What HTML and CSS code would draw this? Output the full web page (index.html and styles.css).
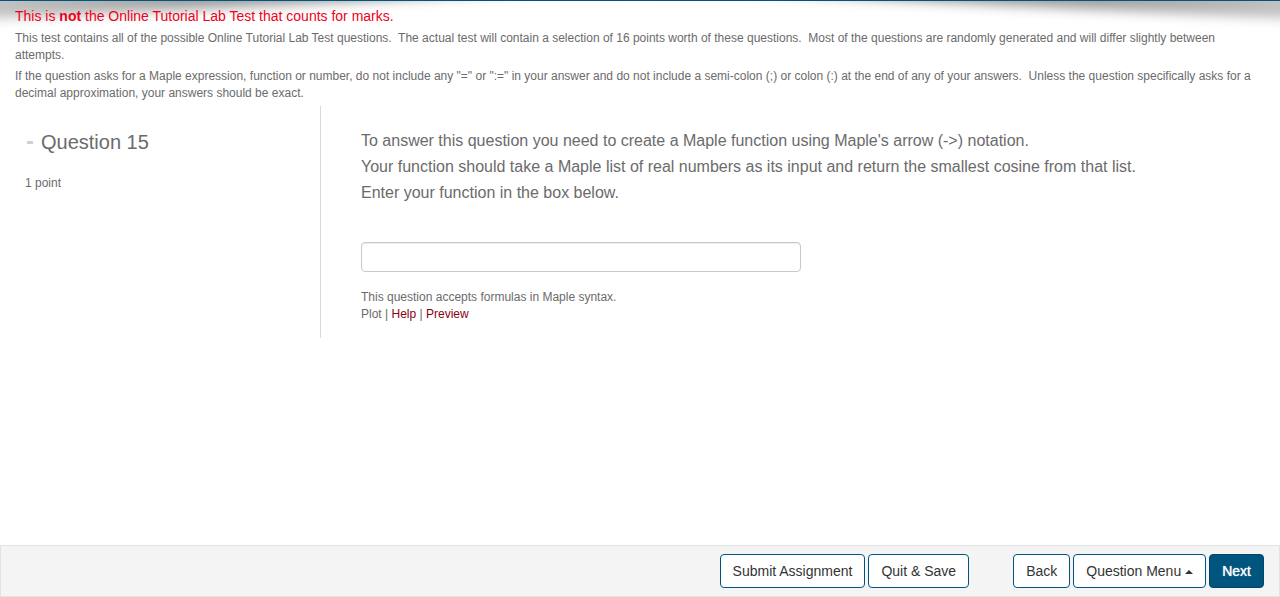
FILE: index.html
```html
<!DOCTYPE html>
<html lang="en">
<head>
<meta charset="utf-8">
<title>Online Tutorial Lab Test</title>
<link rel="stylesheet" href="styles.css">
</head>
<body>
<svg class="top-shadow" viewBox="0 0 1280 40" preserveAspectRatio="none" aria-hidden="true">
  <defs>
    <filter id="soften" x="-10%" y="-100%" width="120%" height="300%">
      <feGaussianBlur stdDeviation="10 6"/>
    </filter>
    <linearGradient id="shade" gradientUnits="userSpaceOnUse" x1="0" y1="0" x2="1280" y2="0">
      <stop offset="0" stop-opacity=".24"/>
      <stop offset=".15" stop-opacity=".37"/>
      <stop offset=".3" stop-opacity=".42"/>
      <stop offset=".5" stop-opacity=".2"/>
      <stop offset=".7" stop-opacity=".42"/>
      <stop offset=".85" stop-opacity=".37"/>
      <stop offset="1" stop-opacity=".24"/>
    </linearGradient>
  </defs>
  <path d="M-60 -40H1340V20L1280 17L1080 8Q900 -1 760 -8Q640 -14 520 -8Q380 -1 200 8L0 17L-60 20Z" fill="url(#shade)" filter="url(#soften)"/>
</svg>
<header class="intro">
  <p class="notice">This is <strong>not</strong> the Online Tutorial Lab Test that counts for marks.</p>
  <p>This test contains all of the possible Online Tutorial Lab Test questions.&nbsp; The actual test will contain a selection of 16 points worth of these questions.&nbsp; Most of the questions are randomly generated and will differ slightly between attempts.</p>
  <p>If the question asks for a Maple expression, function or number, do not include any "=" or ":=" in your answer and do not include a semi-colon (;) or colon (:) at the end of any of your answers.&nbsp; Unless the question specifically asks for a decimal approximation, your answers should be exact.</p>
</header>
<main class="question">
  <section class="summary">
    <h1 class="title"><span class="dash" aria-hidden="true"></span>Question 15</h1>
    <p class="points">1 point</p>
  </section>
  <section class="body">
    <label class="prompt" for="answer">To answer this question you need to create a Maple function using Maple's arrow (-&gt;) notation.<br>Your function should take a Maple list of real numbers as its input and return the smallest cosine from that list.<br>Enter your function in the box below.</label>
    <input class="answer" id="answer" type="text">
    <p class="hint">This question accepts formulas in Maple syntax.</p>
    <p class="links">Plot | <a href="#help">Help</a> | <a href="#preview">Preview</a></p>
  </section>
</main>
<footer class="toolbar">
  <div class="group">
    <button class="btn" type="button">Submit Assignment</button>
    <button class="btn" type="button">Quit &amp; Save</button>
  </div>
  <div class="group">
    <button class="btn" type="button">Back</button>
    <button class="btn" type="button">Question Menu<span class="caret"></span></button>
    <button class="btn primary" type="button">Next</button>
  </div>
</footer>
</body>
</html>
```
FILE: styles.css
```css
* { box-sizing: border-box; }
body {
  margin: 0;
  min-height: 100vh;
  display: flex;
  flex-direction: column;
  border-top: 1px solid #00557f;
  background: #fff;
  color: #6b6b6b;
  font: 12px/17px "Liberation Sans", Arial, sans-serif;
}
p, h1 { margin: 0; }
.top-shadow {
  position: absolute;
  top: 1px;
  left: 0;
  width: 100%;
  height: 40px;
  z-index: -1;
}
.intro {
  display: grid;
  gap: 4px;
  padding: 5px 15px 4px;
}
.notice {
  color: #f00018;
  font-size: 14px;
  line-height: 20px;
}
.question { display: flex; }
.summary {
  flex: 0 0 25%;
  padding: 23px 25px;
}
.title {
  display: flex;
  align-items: center;
  gap: 8px;
  padding-left: 2px;
  font-size: 20px;
  font-weight: 400;
  line-height: 26px;
}
.dash {
  width: 6px;
  height: 3px;
  background: #d0d0d0;
}
.points { margin-top: 20px; }
.body {
  flex: 1;
  padding: 22px 40px 15px;
  border-left: 1px solid #d8d8d8;
}
.prompt {
  display: block;
  font-size: 16px;
  line-height: 26px;
}
.answer {
  display: block;
  width: 440px;
  max-width: 100%;
  height: 30px;
  margin: 36px 0 17px;
  padding: 4px 8px;
  border: 1px solid #c8c8c8;
  border-radius: 4px;
  box-shadow: inset 0 1px 1px rgba(0, 0, 0, .08);
  font: inherit;
}
.links a {
  color: #8b0014;
  text-decoration: none;
}
.toolbar {
  display: flex;
  justify-content: flex-end;
  gap: 44px;
  margin-top: auto;
  padding: 8px 15px;
  border: 1px solid #e3e3e3;
  background: #f4f4f4;
}
.group {
  display: flex;
  gap: 3px;
}
.btn {
  height: 34px;
  padding: 0 12px;
  border: 1px solid #00557f;
  border-radius: 4px;
  background: #fff;
  color: #333;
  font: 14px/20px "Liberation Sans", Arial, sans-serif;
}
.btn.primary {
  background: #00557f;
  border-color: #00466a;
  color: #fff;
  text-shadow: 0 0 1px #fff;
}
.caret {
  display: inline-block;
  margin-left: 4px;
  border: 4px solid transparent;
  border-top: 0;
  border-bottom-color: #333;
  vertical-align: middle;
}
```
